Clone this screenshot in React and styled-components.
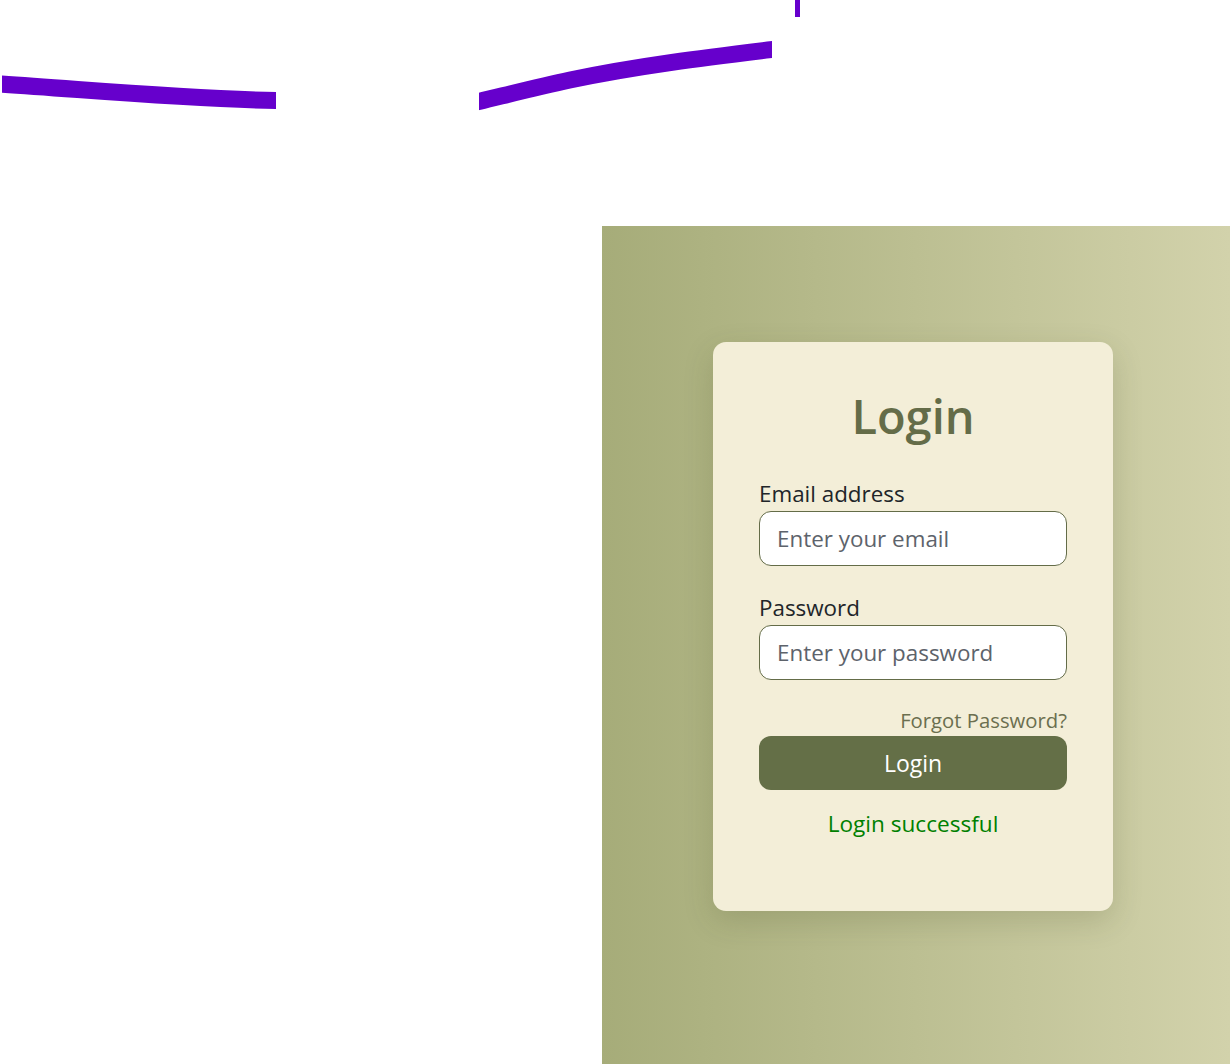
import React from 'react';
import styled, { createGlobalStyle } from 'styled-components';

const GlobalStyle = createGlobalStyle`
  html, body {
    margin: 0;
    padding: 0;
    background: #ffffff;
  }
  body {
    font-family: "Open Sans", "Noto Sans", sans-serif;
  }
  * {
    box-sizing: border-box;
  }
`

const Page = styled.div`
  width: 1230px;
  min-height: 1064px;
  display: flex;
  flex-direction: column;
`

const Header = styled.header`
  height: 226px;
`

const Wave = styled.svg`
  display: block;
  width: 1230px;
  height: 226px;
`

const Body = styled.main`
  display: grid;
  grid-template-columns: 602px 1fr;
  flex: 1;
`

const Blank = styled.div`
  background: #ffffff;
`

const Panel = styled.section`
  min-height: 838px;
  background: linear-gradient(to right, #a6ac79, #d2d2ab);
  display: flex;
  justify-content: center;
  align-items: flex-start;
  padding: 116px 6px 0 0;
`

const Card = styled.form`
  width: 400px;
  background: #f3eed8;
  border-radius: 13px;
  box-shadow: 0 10px 30px rgba(60, 66, 30, 0.18);
  padding: 44px 46px 72px;
  display: flex;
  flex-direction: column;
`

const Title = styled.h1`
  margin: 0 0 33px;
  font-size: 47px;
  line-height: 60px;
  font-weight: 600;
  color: #646c48;
  text-align: center;
`

const Field = styled.div`
  display: flex;
  flex-direction: column;
  margin-bottom: ${p => p.$gap}px;
`

const Label = styled.label`
  font-size: 22.4px;
  line-height: 30px;
  color: #212529;
  margin-bottom: 2px;
`

const Input = styled.input`
  height: 55px;
  width: 100%;
  border: 1px solid #646c48;
  border-radius: 12px;
  background: #ffffff;
  padding: 0 17px;
  font-family: inherit;
  font-size: 22.4px;
  color: #212529;
  outline: none;

  &::placeholder {
    color: #5d636b;
  }
`

const Forgot = styled.a`
  align-self: flex-end;
  font-size: 20.3px;
  line-height: 30px;
  color: #6b6f4f;
  text-decoration: none;
  margin-bottom: 1px;
`

const Button = styled.button`
  height: 54px;
  width: 100%;
  border: none;
  border-radius: 12px;
  background: #646f47;
  color: #ffffff;
  font-family: inherit;
  font-size: 23px;
  cursor: pointer;
`

const Message = styled.p`
  margin: 19px 0 0;
  font-size: 22.6px;
  line-height: 30px;
  color: #008000;
  text-align: center;
`

const App = () => {
  return (
    <Page>
      <GlobalStyle />
      <Header>
        <Wave viewBox="0 0 1230 226">
          <defs>
            <clipPath id="waveCut">
              <rect x="2" y="0" width="274" height="226" />
              <rect x="479" y="0" width="293" height="226" />
            </clipPath>
          </defs>
          <path
            d="M0,84 C92,90 184,98.7 276,100.5 C343.7,101.85 411.3,117.7 479,101.5 C509.3,94.2 539.7,86.4 570,80 C637.3,65.9 704.7,57.6 780,48.5"
            fill="none"
            stroke="#6600cc"
            strokeWidth="17"
            clipPath="url(#waveCut)"
          />
          <rect x="795" y="0" width="5" height="17" fill="#6600cc" />
        </Wave>
      </Header>
      <Body>
        <Blank />
        <Panel>
          <Card onSubmit={e => e.preventDefault()}>
            <Title>Login</Title>
            <Field $gap={27}>
              <Label htmlFor="email">Email address</Label>
              <Input id="email" type="email" placeholder="Enter your email" />
            </Field>
            <Field $gap={25}>
              <Label htmlFor="password">Password</Label>
              <Input id="password" type="password" placeholder="Enter your password" />
            </Field>
            <Forgot href="#">Forgot Password?</Forgot>
            <Button type="submit">Login</Button>
            <Message>Login successful</Message>
          </Card>
        </Panel>
      </Body>
    </Page>
  );
}

export default App;
